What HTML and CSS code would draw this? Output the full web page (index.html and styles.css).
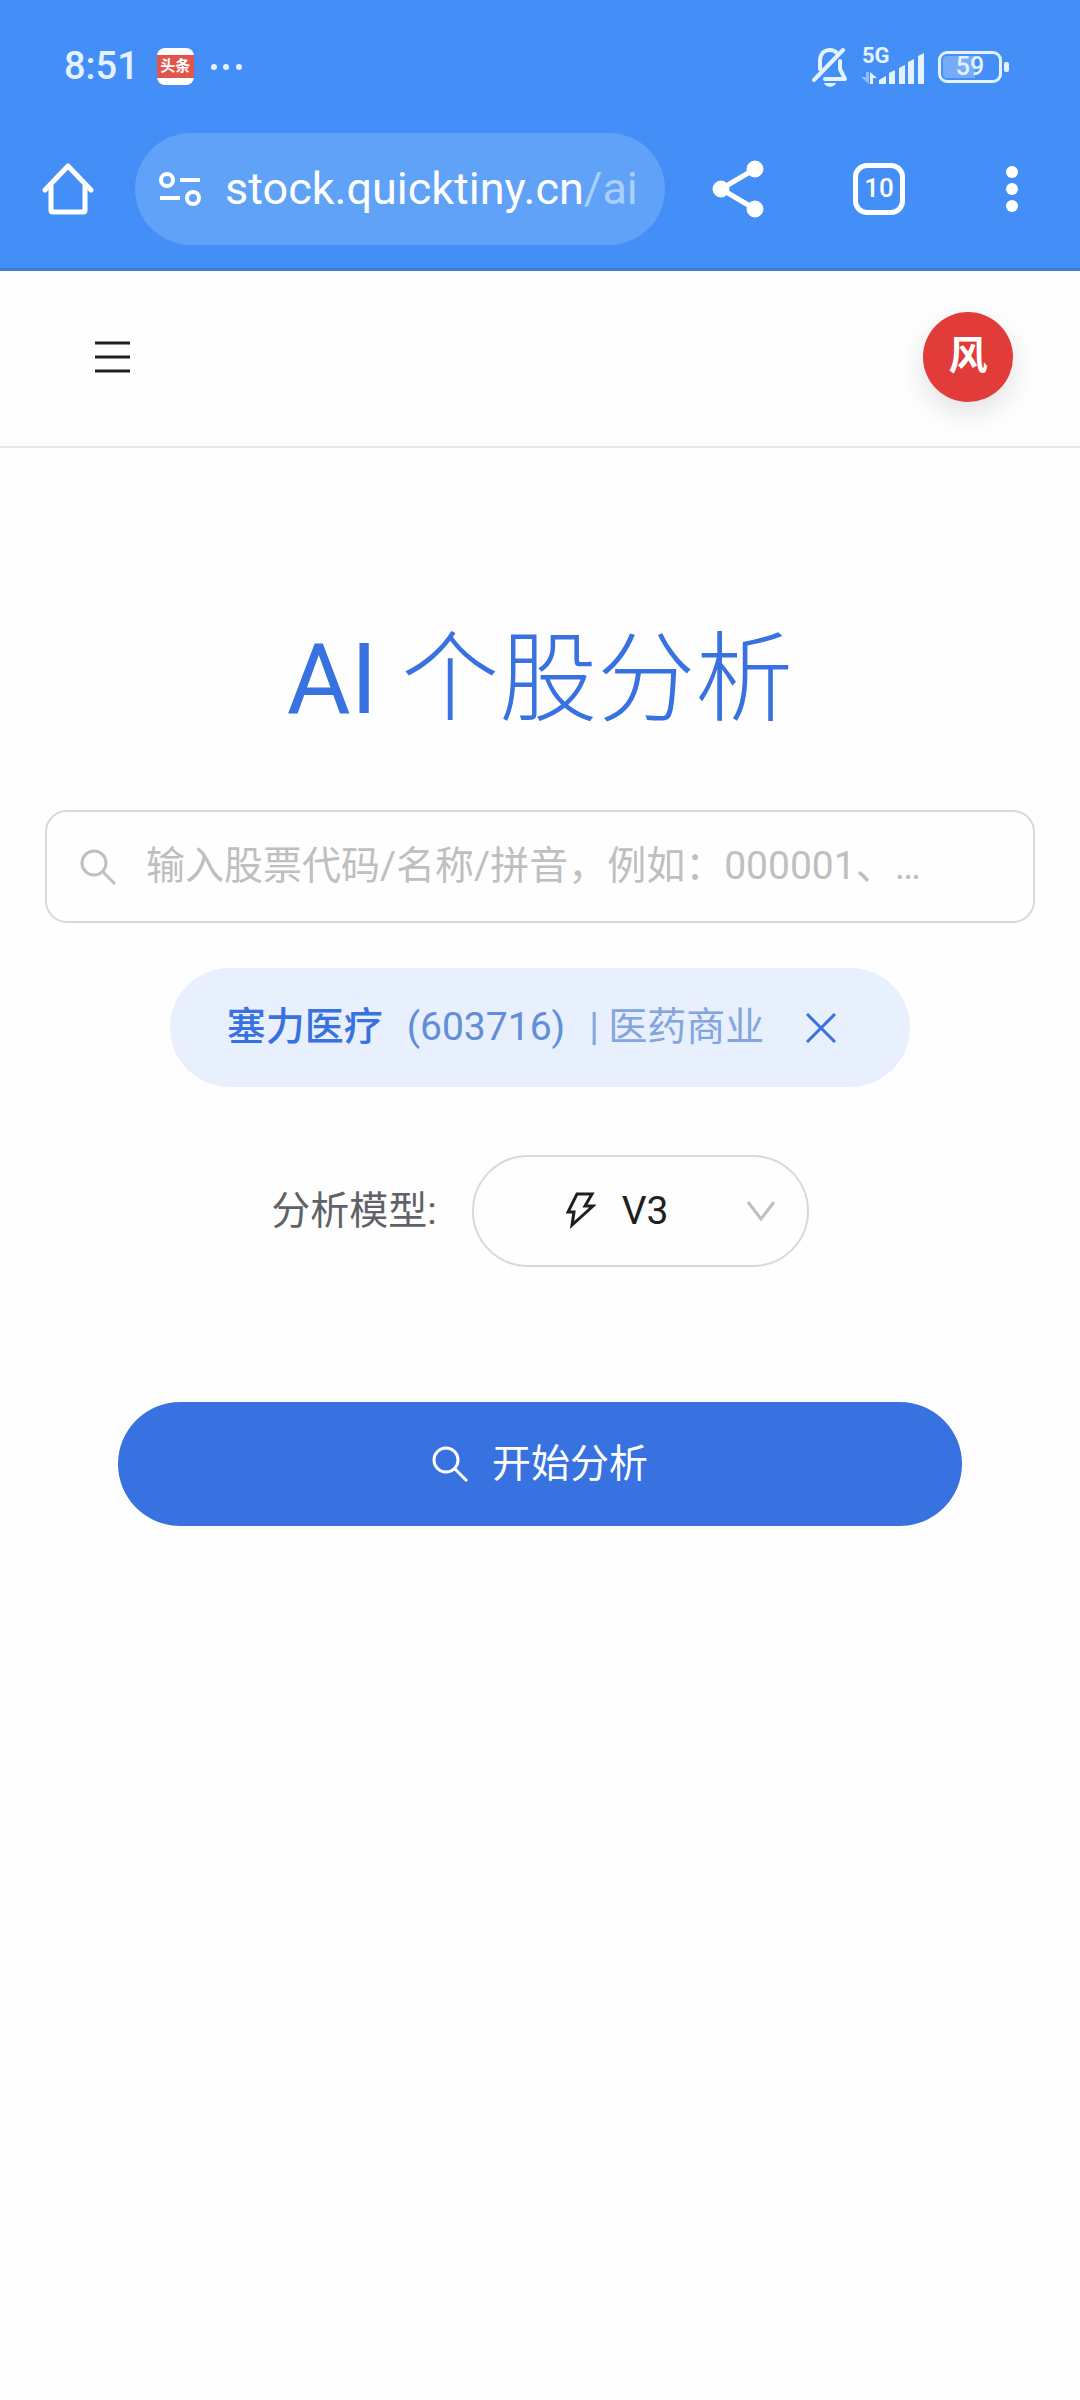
FILE: index.html
```html
<!DOCTYPE html>
<html lang="zh-CN">
<head>
  <meta charset="UTF-8">
  <meta name="viewport" content="width=device-width, initial-scale=1.0">
  <title>AI 个股分析</title>
  <link rel="stylesheet" href="styles.css">
</head>
<body>
  <div class="browser">
    <div class="status-bar">
      <span class="time">8:51</span>
      <span class="app-icon"><span class="app-name">头条</span></span>
      <svg class="more" width="32" height="8" viewBox="0 0 32 8" fill="#e4f2ff">
        <circle cx="4" cy="4" r="3"/><circle cx="16" cy="4" r="3"/><circle cx="29" cy="4" r="3"/>
      </svg>

      <svg class="bell" width="36" height="40" viewBox="0 0 36 40" fill="none" stroke="#e4f2ff" stroke-width="4" stroke-linecap="round" stroke-linejoin="round">
        <path d="M8 22V14C8 7 12 3 18 3c3 0 5 1 7 3"/>
        <path d="M28 14v8l5 10H13"/>
        <path d="M2 33L31 3"/>
        <path d="M12 36h12c-2 5-10 5-12 0z" fill="#e4f2ff" stroke="none"/>
      </svg>
      <div class="signal">
        <span class="network">5G</span>
        <svg width="64" height="34" viewBox="0 0 64 34" fill="#e4f2ff">
          <path d="M5 22h3v12L0 27h5z" fill="#8fbdfb"/>
          <path d="M9 34V22l7 6h-4v6z"/>
          <path d="M18 34v-4l7-4v8z"/>
          <path d="M28 34V23l6-3v14z"/>
          <path d="M38 34V18l6-3v19z"/>
          <path d="M47 34V12l6-3v25z"/>
          <path d="M57 34V6l6-3v31z"/>
        </svg>
      </div>
      <div class="battery"><span class="battery-level">59</span></div>
    </div>

    <div class="toolbar">
      <button class="tool-btn" aria-label="主页">
        <svg width="52" height="54" viewBox="0 0 52 54" fill="none" stroke="#fff" stroke-width="5" stroke-linecap="round" stroke-linejoin="round">
          <path d="M3 28L26 4l23 24"/>
          <path d="M9 24v24q0 2 2 2h30q2 0 2-2V24"/>
        </svg>
      </button>
      <div class="address">
        <button class="tool-btn" aria-label="网站信息">
          <svg width="42" height="38" viewBox="0 0 42 38" fill="none" stroke="#fff" stroke-width="4">
            <circle cx="8" cy="10" r="6"/><path d="M21 10h20"/>
            <circle cx="34" cy="28" r="6"/><path d="M1 28h20"/>
          </svg>
        </button>
        <a class="url" href="#">stock.quicktiny.cn<span class="url-path">/ai</span></a>
      </div>
      <button class="tool-btn" aria-label="分享">
        <svg width="52" height="58" viewBox="0 0 52 58" fill="#fff" stroke="#fff">
          <path d="M43 9L9 29l34 20" fill="none" stroke-width="5"/>
          <circle cx="43" cy="9" r="8"/><circle cx="9" cy="29" r="8"/><circle cx="43" cy="49" r="8"/>
        </svg>
      </button>
      <button class="tabs-btn" aria-label="标签页">10</button>
      <button class="tool-btn" aria-label="菜单">
        <svg width="36" height="48" viewBox="0 0 36 48" fill="#fff">
          <circle cx="18" cy="7" r="6"/><circle cx="18" cy="24" r="6"/><circle cx="18" cy="41" r="6"/>
        </svg>
      </button>
    </div>
  </div>

  <header class="site-header">
    <button class="menu-btn" aria-label="导航">
      <svg width="35" height="32" viewBox="0 0 35 32" stroke="#1f1f1f" stroke-width="3">
        <path d="M0 2h35M0 16h35M0 30h35"/>
      </svg>
    </button>
    <button class="avatar">风</button>
  </header>

  <main class="content">
    <h1 class="title"><span class="latin">AI</span> 个股分析</h1>

    <div class="search-box">
      <svg width="36" height="36" viewBox="0 0 36 36" fill="none" stroke="#bfbfbf" stroke-width="3">
        <circle cx="14" cy="14" r="12"/><path d="M22 22l13 13"/>
      </svg>
      <input class="search-input" type="text" aria-label="股票" placeholder="输入股票代码/名称/拼音，例如：000001、…">
    </div>

    <div class="stock-tag">
      <span class="stock-name">塞力医疗</span>
      <span class="stock-code">(603716)</span>
      <span class="stock-industry">| 医药商业</span>
      <button class="tool-btn close-btn" aria-label="移除">
        <svg width="30" height="30" viewBox="0 0 30 30" stroke="#3871e0" stroke-width="3">
          <path d="M1 1l28 28M29 1L1 29"/>
        </svg>
      </button>
    </div>

    <div class="model-row">
      <label class="model-label" for="model">分析模型:</label>
      <div class="model-select">
        <svg width="30" height="38" viewBox="0 0 30 38" fill="none" stroke="#1f1f1f" stroke-width="3">
          <path d="M11 2h15l-7 12h8L6 33l2-13H2z"/>
        </svg>
        <select class="model-input" id="model">
          <option>V3</option>
        </select>
        <svg width="30" height="22" viewBox="0 0 30 22" fill="none" stroke="#bfbfbf" stroke-width="3">
          <path d="M2 2l13 17L28 2"/>
        </svg>
      </div>
    </div>

    <button class="start-btn">
      <svg width="36" height="36" viewBox="0 0 36 36" fill="none" stroke="#fff" stroke-width="3">
        <circle cx="14" cy="14" r="12"/><path d="M22 22l13 13"/>
      </svg>
      开始分析
    </button>
  </main>
</body>
</html>
```
FILE: styles.css
```css
* {
  box-sizing: border-box;
}

body {
  margin: 0;
  background: #fefefe;
  color: #1f1f1f;
  font-family: Roboto, "Noto Sans CJK SC", sans-serif;
  font-size: 39px;
  line-height: 1.2;
}

button,
input,
select {
  font: inherit;
  color: inherit;
}

button {
  border: none;
  cursor: pointer;
}

svg {
  display: block;
  flex: none;
}

/* phone status bar and browser toolbar */
.browser {
  background: #448ef8;
  border-bottom: 3px solid #4080d4;
  color: #fff;
}

.status-bar {
  display: flex;
  align-items: center;
  height: 133px;
  padding: 0 78px 0 64px;
  color: #e4f2ff;
}

.time {
  font-size: 38px;
  font-weight: 500;
}

.app-icon {
  display: flex;
  align-items: center;
  width: 37px;
  height: 37px;
  margin-left: 18px;
  border-radius: 8px;
  background: #fff;
}

.app-name {
  width: 100%;
  background: #e0564c;
  color: #fff;
  font-size: 15px;
  font-weight: bold;
  line-height: 23px;
  text-align: center;
}

.more {
  margin-left: 16px;
}

.bell {
  margin-left: auto;
}

.signal {
  position: relative;
  margin: 0 13px;
}

.network {
  position: absolute;
  top: -2px;
  left: 1px;
  font-size: 22px;
  font-weight: bold;
  line-height: 16px;
}

.battery {
  position: relative;
  width: 64px;
  height: 32px;
  padding: 2px;
  border: 3px solid #e4f2ff;
  border-radius: 9px;
}

.battery::after {
  content: "";
  position: absolute;
  top: 8px;
  right: -10px;
  width: 5px;
  height: 10px;
  border-radius: 2px;
  background: #e4f2ff;
}

.battery-level {
  display: block;
  border-radius: 4px;
  background: linear-gradient(to right, #74abfa 59%, transparent 59%);
  font-size: 25px;
  font-weight: 500;
  line-height: 22px;
  text-align: center;
}

.toolbar {
  display: flex;
  align-items: center;
  gap: 89px;
  padding: 0 50px 23px 42px;
}

.tool-btn {
  flex: none;
  padding: 0;
  background: none;
}

.address {
  flex: 1;
  display: flex;
  align-items: center;
  gap: 24px;
  height: 112px;
  margin: 0 -42px 0 -48px;
  padding-left: 24px;
  border-radius: 56px;
  background: #60a2f8;
}

.url {
  color: #fff;
  font-size: 45px;
  text-decoration: none;
  white-space: nowrap;
}

.url-path {
  color: #a9d0fc;
}

.tabs-btn {
  width: 52px;
  height: 52px;
  padding: 0;
  border: 5px solid #fff;
  border-radius: 14px;
  background: none;
  font-size: 26px;
  font-weight: 500;
}

/* site header */
.site-header {
  display: flex;
  align-items: center;
  justify-content: space-between;
  height: 177px;
  padding: 0 67px 4px 95px;
  border-bottom: 2px solid #e8e8ea;
}

.menu-btn {
  padding: 0;
  background: none;
}

.avatar {
  width: 90px;
  height: 90px;
  padding: 0;
  border-radius: 50%;
  background: #e13c39;
  box-shadow: 0 10px 28px rgba(0, 0, 0, 0.12);
  color: #fff;
  font-weight: bold;
}

/* analysis form */
.content {
  display: flex;
  flex-direction: column;
  align-items: center;
  padding: 172px 45px 0;
}

.title {
  margin: 0 0 70px;
  color: #3871e0;
  font-size: 98px;
  font-weight: 300;
  line-height: 120px;
}

.latin {
  font-weight: 400;
}

.search-box {
  display: flex;
  align-items: center;
  gap: 30px;
  width: 100%;
  height: 113px;
  padding: 0 33px;
  border: 2px solid #d9d9d9;
  border-radius: 22px;
}

.search-input {
  flex: 1;
  min-width: 0;
  padding: 0;
  border: none;
  outline: none;
  background: none;
  text-overflow: ellipsis;
}

.search-input::placeholder {
  color: #bfbfbf;
}

.stock-tag {
  display: flex;
  align-items: center;
  gap: 24px;
  height: 119px;
  margin-top: 45px;
  padding: 0 74px 0 57px;
  border-radius: 60px;
  background: #e8effd;
  color: #3871e0;
}

.stock-name {
  font-weight: 500;
}

.stock-code {
  color: #628dd8;
}

.stock-industry {
  color: #82a5df;
}

.close-btn {
  margin-left: 18px;
}

.model-row {
  display: flex;
  align-items: center;
  gap: 35px;
  margin-top: 68px;
}

.model-label {
  color: #5f6368;
}

.model-select {
  display: flex;
  align-items: center;
  width: 337px;
  height: 112px;
  padding: 0 31px 0 92px;
  border: 2px solid #d9d9d9;
  border-radius: 56px;
}

.model-input {
  flex: 1;
  min-width: 0;
  padding: 0 0 0 26px;
  border: none;
  outline: none;
  background: none;
  appearance: none;
}

.start-btn {
  display: flex;
  align-items: center;
  justify-content: center;
  gap: 24px;
  width: calc(100% - 146px);
  height: 124px;
  margin-top: 135px;
  border-radius: 62px;
  background: #3871e0;
  color: #fff;
}
```
